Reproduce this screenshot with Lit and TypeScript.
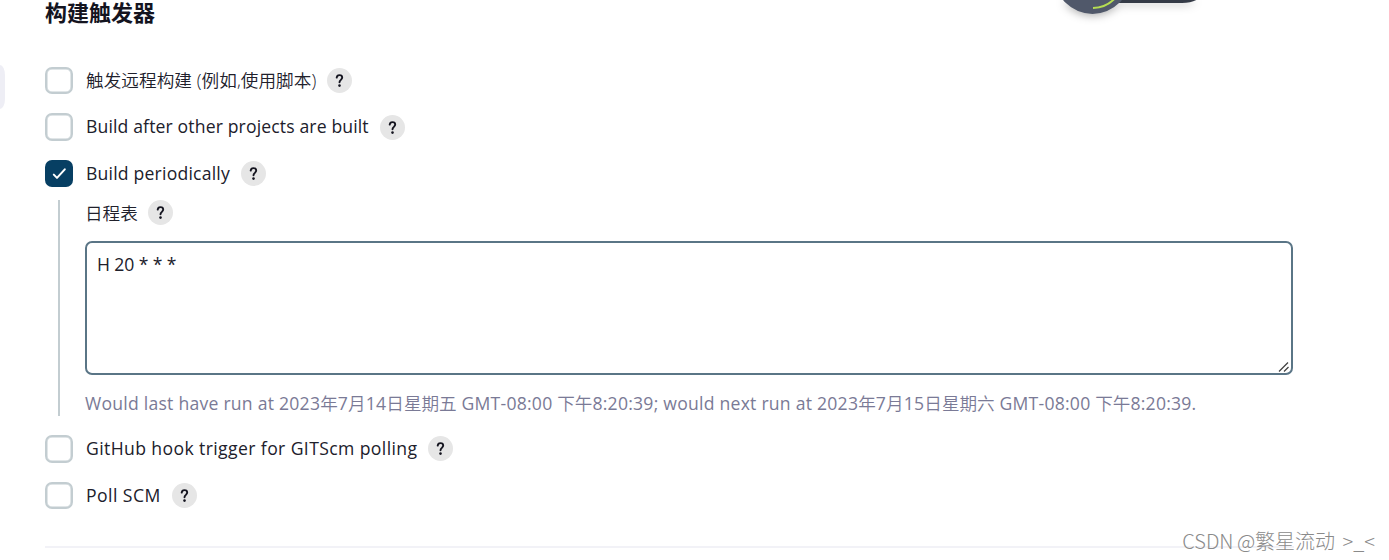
import { html, css, svg, LitElement } from "lit";
import { customElement, property } from "lit/decorators.js";

// wraps Chinese runs so they can be set lighter than the latin text
const mixed = (text: string) =>
  text
    .split(/([\u4e00-\u9fff]+)/)
    .map((part, i) => (i % 2 ? html`<span class="han">${part}</span>` : part));

@customElement("help-button")
class HelpButton extends LitElement {
  static styles = css`
    :host {
      display: block;
      flex: none;
    }

    .help {
      display: flex;
      width: 25px;
      height: 25px;
      border-radius: 50%;
      background: #e6e6e6;
    }
  `;

  render() {
    return html`
      <div class="help">
        <svg width="25" height="25" viewBox="0 0 25 25" fill="none">
          <path
            d="M9.7 9.6C9.9 7.9 10.9 7.1 12.4 7.1c1.7 0 2.8.9 2.8 2.4 0 1.2-.7 1.8-1.4 2.4-.9.7-1.3 1.1-1.3 2.3"
            stroke="#14141f"
            stroke-width="1.9"
            stroke-linecap="round"
          />
          <circle cx="12.5" cy="17.6" r="1.3" fill="#14141f" />
        </svg>
      </div>
    `;
  }
}

@customElement("trigger-option")
class TriggerOption extends LitElement {
  @property() spacing = "0";
  @property({ type: Boolean }) checked = false;

  static styles = css`
    :host {
      display: block;
    }

    .row {
      display: flex;
      align-items: center;
      height: 27.5px;
    }

    .box {
      box-sizing: border-box;
      width: 28px;
      height: 27.5px;
      margin-right: 13px;
      border: 2px solid #c3cdd1;
      border-radius: 7px;
      background: #fff;
      box-shadow: inset 0 0 0 0.5px #c3cdd1;
    }

    .box.checked {
      border: none;
      background: #073f63;
      box-shadow: none;
    }

    .label {
      padding-bottom: 1.6px;
      margin-right: 11px;
      white-space: nowrap;
    }
  `;

  render() {
    return html`
      <div class="row">
        <div class="box ${this.checked ? "checked" : ""}">
          ${this.checked
            ? html`<svg width="28" height="28" viewBox="0 0 28 28" fill="none">
                ${svg`<path d="M8.8 14.6l3.2 3.3 7.8-8.6" stroke="#fff" stroke-width="2" stroke-linecap="round" stroke-linejoin="round" />`}
              </svg>`
            : ""}
        </div>
        <span class="label" style="letter-spacing: ${this.spacing}px"><slot></slot></span>
        <help-button></help-button>
      </div>
    `;
  }
}

@customElement("app-root")
class AppRoot extends LitElement {
  static styles = css`
    :host {
      display: block;
      position: relative;
      box-sizing: border-box;
      width: 1389px;
      height: 560px;
      overflow: hidden;
      background: #fff;
      color: #20202b;
      font-family: "Open Sans", "Noto Sans CJK SC", sans-serif;
      font-size: 17.6px;
      font-weight: 400;
      line-height: 26px;
    }

    .han,
    .light {
      font-weight: 350;
    }

    .han {
      letter-spacing: 0;
    }

    .page {
      display: flex;
    }

    .side {
      width: 5px;
      height: 44px;
      margin: 65px 40px 0 0;
      border-radius: 0 5px 5px 0 / 0 10px 10px 0;
      background: #eeeef5;
    }

    .section {
      width: 1249px;
    }

    .title {
      box-sizing: border-box;
      height: 66.7px;
      margin: 0;
      padding-top: 1px;
      color: #14141f;
      font-family: "Liberation Sans", "Noto Sans CJK SC", sans-serif;
      font-size: 22px;
      font-weight: 700;
    }

    .options {
      display: flex;
      flex-direction: column;
      gap: 19.1px;
    }

    .nested {
      box-sizing: border-box;
      height: 216px;
      margin: 12.6px 0 19.1px 13px;
      padding-left: 25px;
      border-left: 2px solid #c3cdd1;
    }

    .nested-label {
      display: flex;
      align-items: center;
      gap: 10px;
      height: 25px;
    }

    .nested-label .han {
      padding-top: 1px;
    }

    .spec-wrap {
      position: relative;
      width: 1208px;
      height: 134px;
      margin: 16px 0 15px;
    }

    .spec {
      display: block;
      box-sizing: border-box;
      width: 100%;
      height: 100%;
      margin: 0;
      padding: 8px 10px;
      border: 2px solid #5a7586;
      border-radius: 7px;
      outline: none;
      resize: none;
      background: #fff;
      color: inherit;
      font: inherit;
      letter-spacing: -0.1px;
    }

    .grip {
      position: absolute;
      right: 3px;
      bottom: 2px;
    }

    .next-run {
      color: #7a7a96;
      letter-spacing: 0.235px;
      white-space: nowrap;
    }

    .divider {
      height: 2px;
      margin-top: 36.6px;
      background: #f2f2f7;
    }

    .widget {
      position: absolute;
      top: 0;
      left: 1040px;
      filter: drop-shadow(0 2px 4px rgba(0, 0, 0, 0.3));
    }

    .watermark {
      position: absolute;
      right: 14px;
      bottom: 6px;
      color: #8a8a8a;
      font-family: "Noto Sans CJK SC", sans-serif;
      font-size: 20px;
      font-weight: 300;
      white-space: nowrap;
      word-spacing: -1px;
    }

    .face {
      margin-left: 4px;
    }
  `;

  render() {
    return html`
      <div class="page">
        <div class="side"></div>
        <div class="section">
          <h2 class="title">构建触发器</h2>
          <div class="options">
            <trigger-option class="light" spacing="0.08">触发远程构建 (例如,使用脚本)</trigger-option>
            <trigger-option spacing="0.135">Build after other projects are built</trigger-option>
            <trigger-option spacing="0.2" checked>Build periodically</trigger-option>
          </div>
          <div class="nested">
            <div class="nested-label">${mixed("日程表")}<help-button></help-button></div>
            <div class="spec-wrap">
              <textarea class="spec" .value=${"H 20 * * *"}></textarea>
              <svg class="grip" width="12" height="12" viewBox="0 0 12 12" stroke="#444" stroke-width="1.3">
                <path d="M1 10.5L10 1.5M6 10.5L10.5 6" />
              </svg>
            </div>
            <div class="next-run">
              ${mixed("Would last have run at 2023年7月14日星期五 GMT-08:00 下午8:20:39; would next run at 2023年7月15日星期六 GMT-08:00 下午8:20:39.")}
            </div>
          </div>
          <div class="options">
            <trigger-option spacing="0.39">GitHub hook trigger for GITScm polling</trigger-option>
            <trigger-option spacing="0.45">Poll SCM</trigger-option>
          </div>
          <div class="divider"></div>
        </div>
      </div>
      <svg class="widget" width="180" height="30" viewBox="0 0 180 30" fill="none">
        <path d="M50 -20H165V-10Q160 3 142 3H50z" fill="#353b47" />
        <circle cx="52.5" cy="-24" r="38" fill="#50586a" />
        <path d="M53 8A32 32 0 0 0 77 -4" stroke="#b5dd52" stroke-width="2" />
      </svg>
      <div class="watermark">CSDN @繁星流动 <span class="face">&gt;_&lt;</span></div>
    `;
  }
}
